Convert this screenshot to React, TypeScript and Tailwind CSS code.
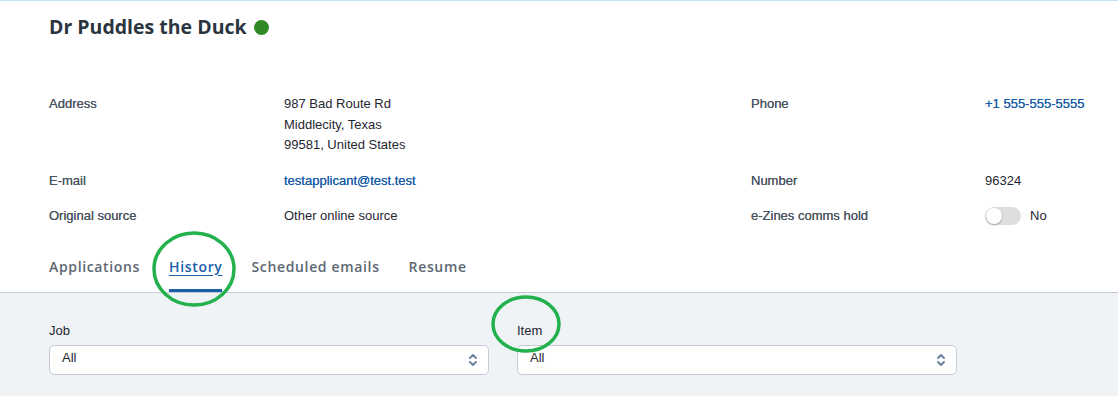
import React from 'react';

const sans = "font-['Liberation_Sans',Arial,sans-serif]";
const open = "font-['Open_Sans','Noto_Sans',sans-serif]";

function Label({ children }: { children: React.ReactNode }) {
  return <div className="text-[#4a5561] [text-shadow:0_0_0.4px_#4a5561]">{children}</div>;
}

function Toggle() {
  return (
    <div className="flex items-center gap-[9px]">
      <div className="relative h-[18px] w-[36px] rounded-full bg-[#dedede]">
        <div className="absolute left-[1px] top-[1px] h-[16px] w-[16px] rounded-full bg-white shadow-[0_1px_2px_rgba(0,0,0,0.3)]" />
      </div>
      <span>No</span>
    </div>
  );
}

function UpDown() {
  return (
    <svg width="10" height="14" viewBox="0 0 10 14" fill="none" stroke="#6f84a0" strokeWidth="2" strokeLinecap="round" strokeLinejoin="round">
      <path d="M2 5l3-3 3 3" />
      <path d="M2 9l3 3 3-3" />
    </svg>
  );
}

function Select({ label }: { label: string }) {
  return (
    <div className="w-[440px]">
      <div className="mb-[4px] leading-[20px] text-[#1f2730]">{label}</div>
      <div className="flex h-[30px] items-center justify-between rounded-[5px] border border-[#c4cbd5] bg-white pl-[12px] pr-[10px]">
        <span className="-mt-[3px] text-[#1f2730]">All</span>
        <UpDown />
      </div>
    </div>
  );
}

const tabs = ['Applications', 'History', 'Scheduled emails', 'Resume'];

export default function App() {
  return (
    <div className={`relative h-[396px] w-[1118px] overflow-hidden bg-white ${sans} text-[13px] text-[#1f2730]`}>
      <div className="h-px bg-[#bfe5f5]" />

      {/* header */}
      <div className="px-[49px] pt-[12px]">
        <div className={`flex items-center gap-[7px] ${open} text-[19.5px] font-bold leading-[28px] text-[#2b3540]`}>
          <span>Dr Puddles the Duck</span>
          <span className="h-[15px] w-[15px] rounded-full bg-[#2f8a26]" />
        </div>
      </div>

      {/* info */}
      <div className="mt-[53px] grid grid-cols-[235px_467px_234px_1fr] gap-y-[15px] px-[49px] leading-[20.5px]">
        <Label>Address</Label>
        <div>
          <div>987 Bad Route Rd</div>
          <div>Middlecity, Texas</div>
          <div>99581, United States</div>
        </div>
        <Label>Phone</Label>
        <div className="whitespace-nowrap text-[#1b5ea8] [text-shadow:0_0_0.5px_#1b5ea8]">+1 555-555-5555</div>

        <Label>E-mail</Label>
        <div className="text-[#1b5ea8] [text-shadow:0_0_0.5px_#1b5ea8]">testapplicant@test.test</div>
        <Label>Number</Label>
        <div>96324</div>

        <Label>Original source</Label>
        <div>Other online source</div>
        <Label>e-Zines comms hold</Label>
        <Toggle />
      </div>

      {/* tabs */}
      <div className={`mt-[30px] flex gap-[29px] border-b border-[#c4ccd5] px-[49px] ${open} text-[14px] font-semibold tracking-[0.65px]`}>
        {tabs.map(t =>
          t === 'History' ? (
            <div key={t} className="border-b-[3px] border-[#1b5ea8] pb-[12px] leading-[20px] text-[#1b5ea8] underline underline-offset-[3px]">
              {t}
            </div>
          ) : (
            <div key={t} className="pb-[15px] leading-[20px] text-[#5d6772]">
              {t}
            </div>
          )
        )}
      </div>

      {/* filters */}
      <div className="h-full bg-[#eff3f6] px-[49px] pt-[28px]">
        <div className="flex gap-[28px]">
          <Select label="Job" />
          <Select label="Item" />
        </div>
      </div>

      {/* hand-drawn annotations */}
      <svg className="pointer-events-none absolute inset-0" width="1118" height="396">
        <ellipse cx="194" cy="269" rx="40" ry="36" fill="none" stroke="#22b14c" strokeWidth="3.5" />
        <ellipse cx="526" cy="324" rx="33" ry="27" fill="none" stroke="#22b14c" strokeWidth="3.5" />
      </svg>
    </div>
  );
}
